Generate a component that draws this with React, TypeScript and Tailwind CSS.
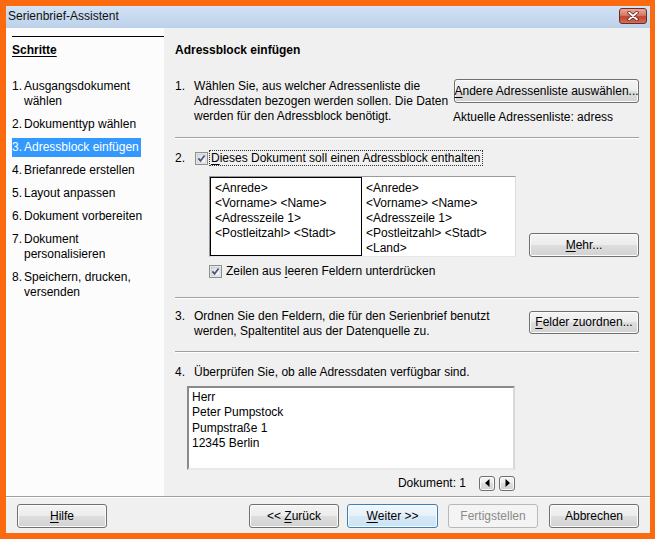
import React from "react";

const btnBase =
  "flex items-center justify-center rounded-[3px] border text-[12px] leading-[15px] whitespace-nowrap";
const btnNormal =
  "border-[#707070] bg-[linear-gradient(#f4f4f4_0%,#ececec_50%,#dedede_50%,#d2d2d2_100%)] shadow-[inset_0_0_0_1px_#fbfbfb] text-black";

function Btn({
  children,
  className = "",
}: {
  children: React.ReactNode;
  className?: string;
}) {
  return <div className={`${btnBase} ${btnNormal} ${className}`}>{children}</div>;
}

function U({ children }: { children: React.ReactNode }) {
  return <span className="underline underline-offset-2">{children}</span>;
}

function CheckBox() {
  return (
    <svg width="13" height="13" viewBox="0 0 13 13" className="shrink-0">
      <defs>
        <linearGradient id="cbg" x1="0" y1="0" x2="1" y2="1">
          <stop offset="0" stopColor="#d6d6d6" />
          <stop offset="1" stopColor="#ffffff" />
        </linearGradient>
      </defs>
      <rect x="0.5" y="0.5" width="12" height="12" fill="#f6f6f6" stroke="#8e8f8f" />
      <rect x="2" y="2" width="9" height="9" fill="url(#cbg)" stroke="#b8b8b8" strokeWidth="0.6" />
      <path d="M3.4 6.4 L5.5 8.9 L9.6 3.6" fill="none" stroke="#3d5687" strokeWidth="1.7" />
    </svg>
  );
}

function Sep() {
  return <div className="border-t border-b border-t-[#a0a0a0] border-b-white" />;
}

export default function App() {
  const steps: { n: string; lines: string[]; active?: boolean }[] = [
    { n: "1.", lines: ["Ausgangsdokument", "wählen"] },
    { n: "2.", lines: ["Dokumenttyp wählen"] },
    { n: "3.", lines: ["Adressblock einfügen"], active: true },
    { n: "4.", lines: ["Briefanrede erstellen"] },
    { n: "5.", lines: ["Layout anpassen"] },
    { n: "6.", lines: ["Dokument vorbereiten"] },
    { n: "7.", lines: ["Dokument", "personalisieren"] },
    { n: "8.", lines: ["Speichern, drucken,", "versenden"] },
  ];

  return (
    <div className="w-[655px] h-[539px] bg-[#fb6a0e] pl-[6px] pr-[5px] pt-[6px] pb-[6px] flex flex-col font-['Liberation_Sans',Arial,sans-serif] text-[12px] leading-[15px] text-black">
      {/* Title bar */}
      <div className="h-[22px] flex bg-[linear-gradient(#d3e2f4,#bcd1ea)] shrink-0">
        <div className="pl-[2px] pt-[3px] text-[#111] text-[12px] leading-[15px]">
          Serienbrief-Assistent
        </div>
        <div className="ml-auto mr-[3px] mt-[2px] w-[28px] h-[16px] rounded-[3px] border border-[#6d2a22] bg-[linear-gradient(#e9a89b,#d67a66_45%,#c2442f_55%,#d06f55)] flex items-center justify-center">
          <svg width="12" height="10" viewBox="0 0 12 10">
            <path d="M2 1.5 L10 8.5 M10 1.5 L2 8.5" stroke="#5a2019" strokeWidth="3.4" strokeLinecap="round" />
            <path d="M2 1.5 L10 8.5 M10 1.5 L2 8.5" stroke="#ffffff" strokeWidth="1.8" strokeLinecap="round" />
          </svg>
        </div>
      </div>

      {/* Body */}
      <div className="flex-1 flex flex-col bg-[#f0f0f0]">
        <div className="h-[468px] flex">
          {/* Left steps panel */}
          <div className="w-[158px] bg-[#fcfcfc] pl-[6px] pt-[8px] flex flex-col">
            <div className="h-px bg-black" />
            <div className="mt-[6px] font-bold underline underline-offset-2">Schritte</div>
            <div className="mt-[19px] flex flex-col gap-[4px]">
              {steps.map((s) => (
                <div
                  key={s.n}
                  className={`flex w-fit py-[2px] pr-[2px] ${s.active ? "bg-[#3399ff] text-white" : ""}`}
                >
                  <span className="w-[12px] shrink-0">{s.n}</span>
                  <span className="whitespace-nowrap">
                    {s.lines.map((l, i) => (
                      <div key={i}>{l}</div>
                    ))}
                  </span>
                </div>
              ))}
            </div>
          </div>

          {/* Right content */}
          <div className="flex-1 px-[11px] pt-[15px] flex flex-col">
            <div className="font-bold">Adressblock einfügen</div>

            {/* Step 1 */}
            <div className="mt-[20px] flex">
              <div className="w-[19px] pt-[1px]">1.</div>
              <div className="pt-[1px] whitespace-nowrap">
                <div>Wählen Sie, aus welcher Adressenliste die</div>
                <div>Adressdaten bezogen werden sollen. Die Daten</div>
                <div>werden für den Adressblock benötigt.</div>
              </div>
              <div className="ml-auto w-[185px] flex flex-col">
                <Btn className="mt-[1px] h-[24px]">
                  <U>A</U>ndere Adressenliste auswählen...
                </Btn>
                <div className="mt-[7px] -ml-px whitespace-nowrap">Aktuelle Adressenliste: adress</div>
              </div>
            </div>

            <div className="mt-[12px]">
              <Sep />
            </div>

            {/* Step 2 */}
            <div className="mt-[11px] flex items-center">
              <div className="w-[20px]">2.</div>
              <CheckBox />
              <div className="ml-px border border-dotted border-[#333] px-px leading-[14px]">
                <U>D</U>ieses Dokument soll einen Adressblock enthalten
              </div>
            </div>

            <div className="mt-[10px] flex">
              <div className="ml-[34px] w-[307px] h-[81px] bg-white border border-t-[#9a9a9a] border-l-[#9a9a9a] border-r-[#dcdcdc] border-b-[#e6e6e6] flex">
                <div className="w-[152px] h-[79px] border border-black pl-[4px] pt-[3px] whitespace-nowrap">
                  <div>&lt;Anrede&gt;</div>
                  <div>&lt;Vorname&gt; &lt;Name&gt;</div>
                  <div>&lt;Adresszeile 1&gt;</div>
                  <div>&lt;Postleitzahl&gt; &lt;Stadt&gt;</div>
                </div>
                <div className="pl-[4px] pt-[4px] whitespace-nowrap">
                  <div>&lt;Anrede&gt;</div>
                  <div>&lt;Vorname&gt; &lt;Name&gt;</div>
                  <div>&lt;Adresszeile 1&gt;</div>
                  <div>&lt;Postleitzahl&gt; &lt;Stadt&gt;</div>
                  <div>&lt;Land&gt;</div>
                </div>
              </div>
              <Btn className="ml-auto self-end w-[110px] h-[24px]">
                <U>M</U>ehr...
              </Btn>
            </div>

            <div className="mt-[7px] ml-[34px] flex items-center gap-[4px]">
              <CheckBox />
              <div>
                Zeilen aus <U>l</U>eeren Feldern unterdrücken
              </div>
            </div>

            <div className="mt-[18px]">
              <Sep />
            </div>

            {/* Step 3 */}
            <div className="mt-[10px] flex">
              <div className="w-[19px]">3.</div>
              <div className="whitespace-nowrap">
                <div>Ordnen Sie den Feldern, die für den Serienbrief benutzt</div>
                <div>werden, Spaltentitel aus der Datenquelle zu.</div>
              </div>
              <Btn className="ml-auto mt-[2px] w-[110px] h-[23px]">
                <U>F</U>elder zuordnen...
              </Btn>
            </div>

            <div className="mt-[12px]">
              <Sep />
            </div>

            {/* Step 4 */}
            <div className="mt-[12px] flex">
              <div className="w-[19px]">4.</div>
              <div>Überprüfen Sie, ob alle Adressdaten verfügbar sind.</div>
            </div>
            <div className="mt-[6px] ml-[12px] w-[328px] h-[84px] bg-white border-2 border-t-[#8a8a8a] border-l-[#8a8a8a] border-r-[#d8d8d8] border-b-[#e8e8e8] pl-[3px] pt-[2px] leading-[15.33px]">
              <div>Herr</div>
              <div>Peter Pumpstock</div>
              <div>Pumpstraße 1</div>
              <div>12345 Berlin</div>
            </div>
            <div className="mt-[5px] ml-[12px] w-[328px] h-[16px] flex items-center justify-end">
              <div className="mr-[13px]">Dokument: 1</div>
              <div className={`${btnBase} ${btnNormal} w-[16px] h-[15px]`}>
                <svg width="5" height="8" viewBox="0 0 5 8">
                  <path d="M4.5 0 L0 4 L4.5 8 Z" fill="#000" />
                </svg>
              </div>
              <div className={`${btnBase} ${btnNormal} ml-[4px] w-[16px] h-[15px]`}>
                <svg width="5" height="8" viewBox="0 0 5 8">
                  <path d="M0.5 0 L5 4 L0.5 8 Z" fill="#000" />
                </svg>
              </div>
            </div>
          </div>
        </div>

        <Sep />

        {/* Bottom buttons */}
        <div className="pt-[6px] px-[11px] flex">
          <Btn className="w-[90px] h-[24px]">
            <U>H</U>ilfe
          </Btn>
          <Btn className="ml-auto w-[90px] h-[24px]">
            <span className="whitespace-pre">{"<< "}</span>
            <U>Z</U>urück
          </Btn>
          <div
            className={`${btnBase} ml-[8px] w-[91px] h-[24px] border-[#3c7fb1] bg-[linear-gradient(#f0f7fc_0%,#e6f1fa_50%,#d6e9f6_50%,#cde3f3_100%)] shadow-[inset_0_0_0_1px_#f8fcff]`}
          >
            <U>W</U>
            <span className="whitespace-pre">{"eiter >>"}</span>
          </div>
          <div
            className={`${btnBase} ml-[10px] w-[90px] h-[24px] border-[#b5b9bc] bg-[#f4f4f4] text-[#8a8a8a]`}
          >
            Fertigstellen
          </div>
          <Btn className="ml-[11px] w-[90px] h-[24px]">Abbrechen</Btn>
        </div>
      </div>
    </div>
  );
}
